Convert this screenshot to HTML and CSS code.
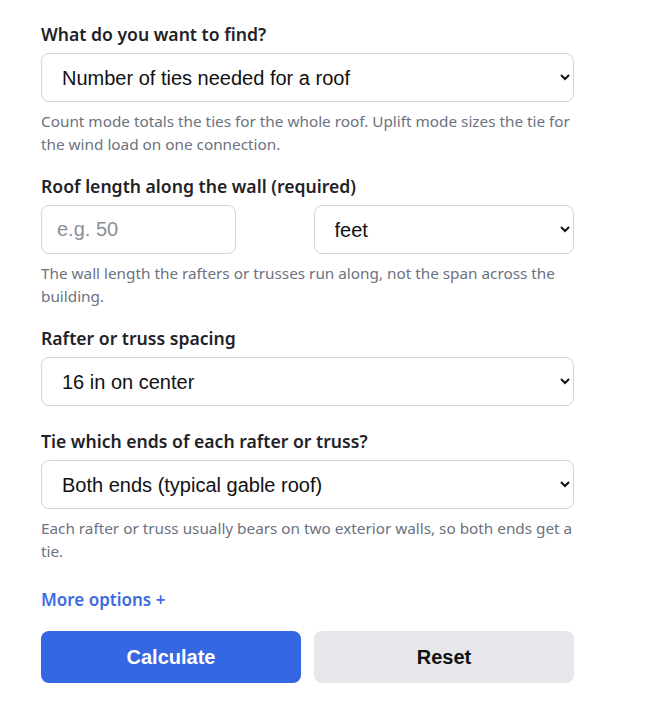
FILE: index.html
```html
<!DOCTYPE html>
<html lang="en">
<head>
<meta charset="utf-8">
<title>Roof ties calculator</title>
<link rel="stylesheet" href="styles.css">
</head>
<body>
<form class="calc">
  <div class="field">
    <label class="label" for="mode">What do you want to find?</label>
    <select id="mode" class="control">
      <option>Number of ties needed for a roof</option>
      <option>Uplift load on one connection</option>
    </select>
    <p class="hint">Count mode totals the ties for the whole roof. Uplift mode sizes the tie for the wind load on one connection.</p>
  </div>
  <div class="field">
    <label class="label" for="len">Roof length along the wall (required)</label>
    <div class="pair">
      <input id="len" class="control input" type="text" placeholder="e.g. 50">
      <select class="control">
        <option>feet</option>
        <option>meters</option>
      </select>
    </div>
    <p class="hint">The wall length the rafters or trusses run along, not the span across the building.</p>
  </div>
  <div class="field field-plain">
    <label class="label" for="sp">Rafter or truss spacing</label>
    <select id="sp" class="control">
      <option>16 in on center</option>
      <option>24 in on center</option>
    </select>
  </div>
  <div class="field">
    <label class="label" for="ends">Tie which ends of each rafter or truss?</label>
    <select id="ends" class="control">
      <option>Both ends (typical gable roof)</option>
      <option>One end</option>
    </select>
    <p class="hint">Each rafter or truss usually bears on two exterior walls, so both ends get a tie.</p>
  </div>
  <a class="more" href="#">More options +</a>
  <div class="actions">
    <button type="button" class="btn primary">Calculate</button>
    <button type="reset" class="btn secondary">Reset</button>
  </div>
</form>
</body>
</html>
```
FILE: styles.css
```css
html, body {
  margin: 0;
  padding: 0;
  background: #ffffff;
}
body {
  font-family: "Noto Sans", "Open Sans", sans-serif;
  color: #1f2328;
}
.calc {
  width: 533px;
  padding: 22px 0 0 41px;
  display: flex;
  flex-direction: column;
}
.field {
  display: flex;
  flex-direction: column;
  margin-bottom: 18px;
}
.field-plain {
  margin-bottom: 23px;
}
.label {
  font-size: 17.6px;
  font-weight: 600;
  line-height: 24px;
  margin-bottom: 7px;
  color: #1f2328;
}
.control {
  box-sizing: border-box;
  height: 49px;
  border: 1px solid #d1d5db;
  border-radius: 8px;
  background-color: #ffffff;
  font-family: "Liberation Sans", Arial, sans-serif;
  font-size: 20px;
  color: #111111;
  padding: 0 16px 0 16px;
  width: 100%;
  margin: 0;
}
.input {
  width: 195px;
  height: 49px;
  padding: 0 15px;
}
.input::placeholder {
  color: #8a8f98;
}
.pair {
  display: grid;
  grid-template-columns: 1fr 1fr;
  column-gap: 12px;
  align-items: start;
}
.hint {
  margin: 8px 0 0 0;
  font-size: 15.3px;
  line-height: 23px;
  color: #6b7280;
}
.more {
  font-size: 17px;
  font-weight: 600;
  line-height: 24px;
  color: #3b6ae3;
  text-decoration: none;
  margin-top: 7px;
  align-self: flex-start;
}
.actions {
  display: grid;
  grid-template-columns: 1fr 1fr;
  column-gap: 13px;
  margin-top: 19px;
}
.btn {
  height: 52px;
  border: none;
  border-radius: 8px;
  font-family: "Liberation Sans", Arial, sans-serif;
  font-size: 20px;
  font-weight: 700;
  cursor: pointer;
}
.primary {
  background: #3567e3;
  color: #ffffff;
}
.secondary {
  background: #e5e7eb;
  color: #111111;
}
```
